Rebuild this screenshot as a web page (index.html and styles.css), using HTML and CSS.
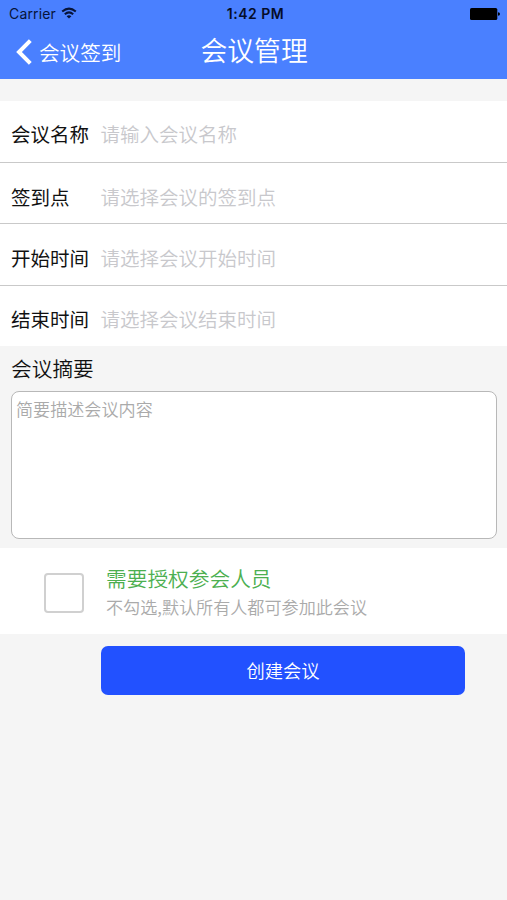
FILE: index.html
```html
<!DOCTYPE html>
<html lang="zh-CN">
<head>
<meta charset="utf-8">
<title>会议管理</title>
<link rel="stylesheet" href="styles.css">
</head>
<body>
<header class="header">
  <div class="status">
    <div class="carrier"><span>Carrier</span>
      <svg class="wifi" width="16" height="12" viewBox="0 0 16 12" fill="none" stroke="#07143a" stroke-width="2">
        <path d="M1.2 4.6Q8-1.4 14.8 4.6"/><path d="M3.8 7.3Q8 3.5 12.2 7.3"/><path d="M8 11.6L5.6 9.2Q8 7.2 10.4 9.2Z" fill="#07143a" stroke="none"/>
      </svg>
    </div>
    <div class="time">1:42 PM</div>
    <svg class="battery" width="30" height="12" viewBox="0 0 30 12"><rect width="27.3" height="12" rx="1.6"/><path d="M28 4.2Q30 4.4 30 6T28 7.8Z"/></svg>
  </div>
  <nav class="nav">
    <a class="back">
      <svg width="16" height="26" viewBox="0 0 16 26" fill="none" stroke="#fff" stroke-width="4"><path d="M14.3 1.6L3 13L14.3 24.4"/></svg>
      <span>会议签到</span>
    </a>
    <h1 class="title">会议管理</h1>
  </nav>
</header>
<main>
  <section class="fields">
    <div class="row"><label class="label">会议名称</label><span class="hint">请输入会议名称</span></div>
    <div class="row"><label class="label">签到点</label><span class="hint">请选择会议的签到点</span></div>
    <div class="row"><label class="label">开始时间</label><span class="hint">请选择会议开始时间</span></div>
    <div class="row"><label class="label">结束时间</label><span class="hint">请选择会议结束时间</span></div>
  </section>
  <section class="summary">
    <h2 class="summary-title">会议摘要</h2>
    <div class="summary-box">简要描述会议内容</div>
  </section>
  <section class="auth">
    <span class="checkbox"></span>
    <div class="auth-text">
      <div class="auth-title">需要授权参会人员</div>
      <div class="auth-note">不勾选,默认所有人都可参加此会议</div>
    </div>
  </section>
  <button class="submit">创建会议</button>
</main>
</body>
</html>
```
FILE: styles.css
```css
* { box-sizing: border-box; }
body {
  margin: 0;
  min-height: 900px;
  background: #f5f5f5;
  color: #111;
  font-family: "Noto Sans CJK SC", sans-serif;
  font-weight: 350;
}
.header { height: 79px; background: #4a80ff; }
.status {
  display: grid;
  grid-template-columns: 1fr auto 1fr;
  height: 27px;
  padding: 0 7px 0 9px;
  align-items: center;
  color: #07143a;
  font: 400 14px/27px Inter, sans-serif;
}
.carrier { display: flex; align-items: center; gap: 5.5px; letter-spacing: 0.15px; }
.wifi { margin-top: -2px; }
.time { padding-left: 2px; font-weight: 600; letter-spacing: 0.5px; color: #050d28; }
.battery { justify-self: end; fill: #000; }
.nav {
  display: grid;
  grid-template-columns: 200.5px 1fr;
  height: 50px;
  color: #fff;
}
.back {
  display: flex;
  align-items: center;
  gap: 7px;
  padding-left: 16px;
  font-size: 20.6px;
}
.title { margin: 0; font-size: 26.8px; line-height: 46px; font-weight: 350; }
.fields { margin-top: 22px; background: #fff; }
.row {
  display: flex;
  align-items: center;
  height: 61.3px;
  padding: 6px 11px 0;
  border-bottom: 1.3px solid #c9c9c9;
  font-size: 19.5px;
}
.row:first-child { height: 62px; padding-top: 4px; }
.row:last-child { border-bottom: 0; height: 60.4px; }
.label { width: 89.5px; font-weight: 400; }
.hint { color: #c8c8cc; }
.summary { height: 202px; padding: 0 10px 0 11px; }
.summary-title { margin: 0; height: 45px; font-size: 20.7px; line-height: 45px; font-weight: 350; }
.summary-box {
  height: 148px;
  padding: 4px;
  border: 1.5px solid #b8b8b8;
  border-radius: 8px;
  background: #fff;
  color: #aaa;
  font-size: 17.1px;
  line-height: 26px;
}
.auth {
  display: flex;
  align-items: center;
  gap: 22px;
  height: 86px;
  padding: 4px 0 0 44px;
  background: #fff;
}
.checkbox { width: 40px; height: 40px; border: 2px solid #d0d0d0; border-radius: 4px; }
.auth-text { padding-bottom: 3px; }
.auth-title { color: #4caf50; font-size: 20.7px; line-height: 30px; }
.auth-note { color: #aaa; font-size: 17.1px; line-height: 27px; }
.submit {
  display: block;
  width: 364px;
  height: 49px;
  margin: 12px 0 0 101px;
  padding: 0;
  border: 0;
  border-radius: 7px;
  background: #2251ff;
  color: #fff;
  font: 350 18.3px "Noto Sans CJK SC", sans-serif;
}
```
